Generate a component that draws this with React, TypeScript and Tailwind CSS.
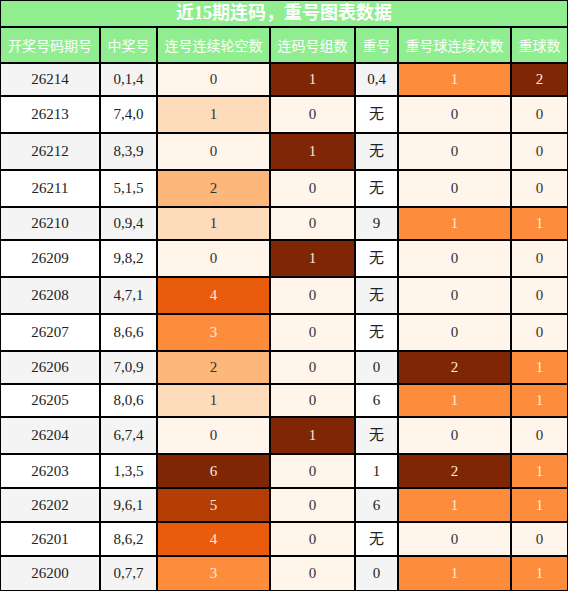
const rows = [
  { qh: "26214", kj: "0,1,4", lh: 0, zs: 1, ch: "0,4", cc: 1, cq: 2 },
  { qh: "26213", kj: "7,4,0", lh: 1, zs: 0, ch: "无", cc: 0, cq: 0 },
  { qh: "26212", kj: "8,3,9", lh: 0, zs: 1, ch: "无", cc: 0, cq: 0 },
  { qh: "26211", kj: "5,1,5", lh: 2, zs: 0, ch: "无", cc: 0, cq: 0 },
  { qh: "26210", kj: "0,9,4", lh: 1, zs: 0, ch: "9", cc: 1, cq: 1 },
  { qh: "26209", kj: "9,8,2", lh: 0, zs: 1, ch: "无", cc: 0, cq: 0 },
  { qh: "26208", kj: "4,7,1", lh: 4, zs: 0, ch: "无", cc: 0, cq: 0 },
  { qh: "26207", kj: "8,6,6", lh: 3, zs: 0, ch: "无", cc: 0, cq: 0 },
  { qh: "26206", kj: "7,0,9", lh: 2, zs: 0, ch: "0", cc: 2, cq: 1 },
  { qh: "26205", kj: "8,0,6", lh: 1, zs: 0, ch: "6", cc: 1, cq: 1 },
  { qh: "26204", kj: "6,7,4", lh: 0, zs: 1, ch: "无", cc: 0, cq: 0 },
  { qh: "26203", kj: "1,3,5", lh: 6, zs: 0, ch: "1", cc: 2, cq: 1 },
  { qh: "26202", kj: "9,6,1", lh: 5, zs: 0, ch: "6", cc: 1, cq: 1 },
  { qh: "26201", kj: "8,6,2", lh: 4, zs: 0, ch: "无", cc: 0, cq: 0 },
  { qh: "26200", kj: "0,7,7", lh: 3, zs: 0, ch: "0", cc: 1, cq: 1 },
];

const headers = ["开奖号码期号", "中奖号", "连号连续轮空数", "连码号组数", "重号", "重号球连续次数", "重球数"];

// Oranges scale, picked by value / column max
const heat6 = ["bg-[#fff5eb] text-[#333]", "bg-[#fedcbb] text-[#333]", "bg-[#fdb77a] text-[#333]", "bg-[#fd8d3c] text-[#fdebd9]", "bg-[#e95c0d] text-[#fdebd9]", "bg-[#b53c03] text-[#fdebd9]", "bg-[#7f2704] text-[#fdebd9]"];
const heat2 = ["bg-[#fff5eb] text-[#333]", "bg-[#fd8d3c] text-[#fdebd9]", "bg-[#7f2704] text-[#fdebd9]"];
const heat1 = ["bg-[#fff5eb] text-[#333]", "bg-[#7f2704] text-[#fdebd9]"];

const cell = "flex items-center justify-center text-[15px]";

export default function App() {
  return (
    <div className="w-[568px] bg-black p-px grid gap-[2px] grid-cols-[98px_55px_111px_83px_41px_111px_55px] grid-rows-[25px_34px_31px_35px_35px_35px_31px_35px_35px_35px_31px_31px_35px_32px_32px_32px_33px] font-['Liberation_Serif','Noto_Sans_CJK_SC',serif]">
      <div className="col-span-7 bg-[#90ee90] flex items-center justify-center text-white font-bold text-[18px]">
        近15期连码，重号图表数据
      </div>
      {headers.map((h) => (
        <div key={h} className="bg-[#90ee90] flex items-center justify-center text-white text-[14px] font-['Noto_Sans_CJK_SC',sans-serif]">
          {h}
        </div>
      ))}
      {rows.map((r, i) => {
        const plain = i % 2 === 0 ? "bg-[#f4f4f4] text-[#222]" : "bg-white text-[#222]";
        return [
          <div key={r.qh + "a"} className={`${cell} ${plain}`}>{r.qh}</div>,
          <div key={r.qh + "b"} className={`${cell} ${plain}`}>{r.kj}</div>,
          <div key={r.qh + "c"} className={`${cell} ${heat6[r.lh]}`}>{r.lh}</div>,
          <div key={r.qh + "d"} className={`${cell} ${heat1[r.zs]}`}>{r.zs}</div>,
          <div key={r.qh + "e"} className={`${cell} ${plain}`}>{r.ch}</div>,
          <div key={r.qh + "f"} className={`${cell} ${heat2[r.cc]}`}>{r.cc}</div>,
          <div key={r.qh + "g"} className={`${cell} ${heat2[r.cq]}`}>{r.cq}</div>,
        ];
      })}
    </div>
  );
}
